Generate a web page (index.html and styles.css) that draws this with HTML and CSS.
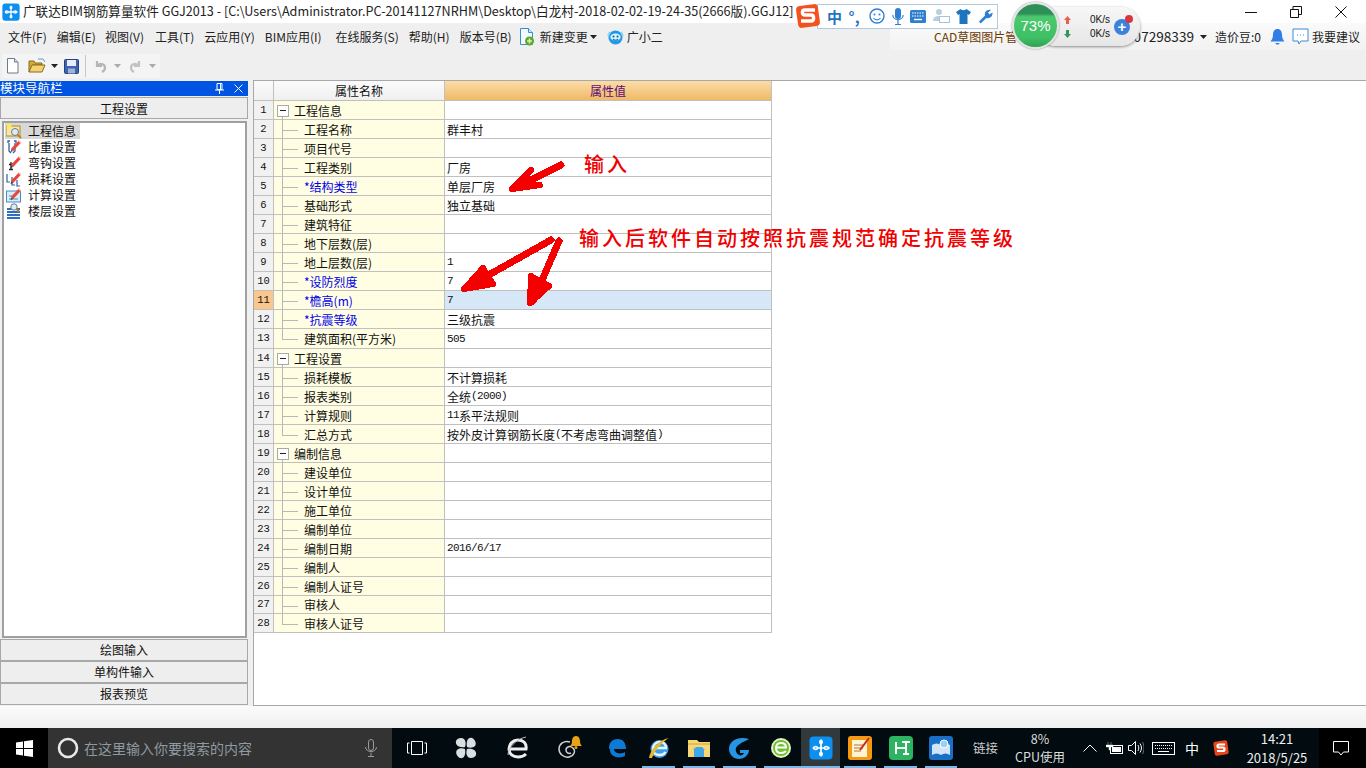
FILE: index.html
```html
<!DOCTYPE html>
<html lang="zh-CN">
<head>
<meta charset="utf-8">
<title>广联达BIM钢筋算量软件 GGJ2013</title>
<link rel="stylesheet" href="styles.css">
</head>
<body>
<svg class="defs" aria-hidden="true">
  <symbol id="logo" viewBox="0 0 24 24">
    <rect x="0.5" y="0.5" width="23" height="23" rx="4" fill="#0b8ff0"/>
    <path d="M4 12c2 2 4 1.500 5 0h6c1 1.500 3 2 5 0-2-2-4-1.500-5 0M9 12c-1-1.500-3-2-5 0M12 4v16M12 4c-1.500 1-1.500 3 0 4 1.500-1 1.500-3 0-4M12 20c-1.500-1-1.500-3 0-4 1.500 1 1.500 3 0 4" fill="none" stroke="#fff" stroke-width="1.700"/>
  </symbol>
  <symbol id="pencil" viewBox="0 0 16 16">
    <path d="M6 11 14 2.500" stroke="#e8463a" stroke-width="3.200"/>
    <path d="M7 12 4.500 13 5.500 10.500z" fill="#333"/>
    <path d="M12.500 1.500l2.500 2.500" stroke="#f7c0b8" stroke-width="1.200"/>
  </symbol>
  <symbol id="chev" viewBox="0 0 7 4"><path d="M0 0h7L3.500 4z"/></symbol>
</svg>

<div class="app">
  <header class="titlebar">
    <svg class="t-logo"><use href="#logo"/></svg>
    <span class="t-text">广联达BIM钢筋算量软件 GGJ2013 - [C:\Users\Administrator.PC-20141127NRHM\Desktop\白龙村-2018-02-02-19-24-35(2666版).GGJ12]</span>
    <div class="winbtns">
      <span class="winbtn"><svg width="12" height="12"><path d="M0 6.500h12" stroke="#111"/></svg></span>
      <span class="winbtn"><svg width="12" height="12"><path d="M.5 3.500h8v8h-8zM3 3.500V.5h8.500v8H8.500" fill="none" stroke="#111"/></svg></span>
      <span class="winbtn"><svg width="12" height="12"><path d="M.5.500l11 11M11.500.500l-11 11" stroke="#111"/></svg></span>
    </div>
  </header>

  <nav class="menubar">
    <span class="mi">文件(F)</span>
    <span class="mi">编辑(E)</span>
    <span class="mi mi-v">视图(V)</span>
    <span class="mi">工具(T)</span>
    <span class="mi">云应用(Y)</span>
    <span class="mi mi-bim">BIM应用(I)</span>
    <span class="mi">在线服务(S)</span>
    <span class="mi">帮助(H)</span>
    <span class="mi mi-ver">版本号(B)</span>
    <span class="mi mi-new">
      <svg width="16" height="18" viewBox="0 0 16 18"><path d="M1.500.5h8l4 4v12h-12z" fill="#f3f9ff" stroke="#3a8ed0"/><path d="M9.500.5v4h4" fill="#cfe6fa" stroke="#3a8ed0"/><circle cx="10.500" cy="13" r="4.500" fill="#5aa92a"/><path d="M10.500 10.500v5M8 13h5" stroke="#d8f2b8" stroke-width="1.600"/></svg>
      新建变更 <svg class="chev chev-m"><use href="#chev"/></svg>
    </span>
    <span class="mi mi-ic">
      <svg width="17" height="16" viewBox="0 0 17 16"><circle cx="8.500" cy="8.500" r="7" fill="#1e9be8"/><path d="M1 7 3 3M16 7l-2-4" stroke="#8fd0f5" stroke-width="2"/><ellipse cx="8.500" cy="8" rx="5.200" ry="3.600" fill="#d8f1ff"/><circle cx="6.500" cy="7.500" r="1" fill="#0a5a9a"/><circle cx="10.500" cy="7.500" r="1" fill="#0a5a9a"/><path d="M6 10c1.500 1.500 3.500 1.500 5 0" stroke="#0a5a9a" fill="none"/></svg>
      广小二
    </span>
    <div class="menu-right">
      <span class="cad">CAD草图图片管</span>
      <span class="phone">907298339</span>
      <svg class="chev chev-r"><use href="#chev"/></svg>
      <span class="beans">造价豆:0</span>
      <svg class="bell" width="15" height="18" viewBox="0 0 15 18"><path d="M7.500 1C4.500 1 3 3.500 3 6.500c0 4-1.500 5.500-2.500 7h14c-1-1.500-2.500-3-2.500-7C12 3.500 10.500 1 7.500 1z" fill="#2f7fe6"/><path d="M5.500 15h4c0 2-4 2-4 0z" fill="#2f7fe6"/></svg>
      <svg class="chat" width="17" height="18" viewBox="0 0 17 18"><path d="M1 1h15v12H9l-2 3-1-3H1z" fill="#fff" stroke="#3d8bd8"/><path d="M5 7h1M8 7h1M11 7h1" stroke="#3d8bd8"/></svg>
      <span>我要建议</span>
    </div>
  </nav>

  <div class="toolbar">
    <div class="tools">
      <svg class="tool" width="15" height="16" viewBox="0 0 15 16"><path d="M2.500.5h7l3.500 3.500v11h-10.500z" fill="#fff" stroke="#6b7b8a"/><path d="M9.500.5v3.500H13" fill="#dce4ec" stroke="#6b7b8a"/></svg>
      <svg class="tool t2" width="18" height="16" viewBox="0 0 18 16"><path d="M1 3h5l1 2h7v2H5L1 14z" fill="#d8a83c" stroke="#8a6a1c"/><path d="M1 14l3-7h13l-3 7z" fill="#f3d272" stroke="#8a6a1c"/><path d="M10 1h5l2 3" fill="none" stroke="#5a9ad0"/></svg>
      <svg class="chev t3"><use href="#chev"/></svg>
      <svg class="tool t4" width="15" height="15" viewBox="0 0 15 15"><rect x=".5" y=".5" width="14" height="14" rx="1" fill="#3f63b0" stroke="#23417e"/><rect x="3" y="1" width="9" height="6" fill="#e8eef8"/><rect x="4" y="9.500" width="7" height="5" fill="#9fb3d8"/></svg>
      <i class="sep"></i>
      <svg class="tool t5" width="15" height="15" viewBox="0 0 15 15"><path d="M4 2v5h5M4 7c2-3 8-3 8 2 0 2-1 3-3 4" fill="none" stroke="#b5b5b5" stroke-width="2.200"/></svg>
      <svg class="chev t6 dim"><use href="#chev"/></svg>
      <svg class="tool t7" width="15" height="15" viewBox="0 0 15 15"><path d="M11 2v5H6M11 7C9 4 3 4 3 9c0 2 1 3 3 4" fill="none" stroke="#c2c2c2" stroke-width="2.200"/></svg>
      <svg class="chev t6 dim"><use href="#chev"/></svg>
    </div>
  </div>

  <div class="workspace">
    <aside class="nav">
      <div class="nav-head">
        <span>模块导航栏</span>
        <svg class="pin" width="9" height="11" viewBox="0 0 9 11"><path d="M2 .5h5v6H2zM0 7h9M4.500 7v4M5.500 1v5" fill="none" stroke="#fff"/></svg>
        <svg class="nav-x" width="9" height="9" viewBox="0 0 9 9"><path d="M.5.500l8 8M8.500.500l-8 8" stroke="#fff"/></svg>
      </div>
      <div class="nav-btn nav-top">工程设置</div>
      <ul class="nav-list">
        <li class="li active">
          <svg width="16" height="16" viewBox="0 0 16 16"><rect x="0" y="3" width="14" height="10" fill="#f6e6a8" stroke="#b08a30"/><circle cx="3" cy="3" r="2.500" fill="#ffe860"/><circle cx="9" cy="9" r="3.500" fill="#dfeaf5" stroke="#6a7a8a"/><path d="M11.500 11.500l3.500 3.500" stroke="#c08020" stroke-width="2"/></svg>
          工程信息
        </li>
        <li class="li">
          <svg width="16" height="16" viewBox="0 0 16 16"><path d="M4 2H2v2M3 4v8l2 2M8 2h2v2M9 4v8l-2 2" fill="none" stroke="#2d5fa8" stroke-width="1.300"/><use href="#pencil"/></svg>
          比重设置
        </li>
        <li class="li">
          <svg width="16" height="16" viewBox="0 0 16 16"><path d="M5 7v7M3 14.500h4M3 9.500h4" fill="none" stroke="#222" stroke-width="1.300"/><use href="#pencil"/></svg>
          弯钩设置
        </li>
        <li class="li">
          <svg width="16" height="16" viewBox="0 0 16 16"><path d="M1 3v8h3M6 6v8h3M11 9v6h3" fill="none" stroke="#2d5fa8" stroke-width="1.200"/><use href="#pencil"/></svg>
          损耗设置
        </li>
        <li class="li">
          <svg width="16" height="16" viewBox="0 0 16 16"><rect x=".5" y="4" width="14" height="11" fill="#d8ecfa" stroke="#4a8ac0"/><path d="M3 9h3M3 12h9" stroke="#4a8ac0"/><use href="#pencil"/></svg>
          计算设置
        </li>
        <li class="li">
          <svg width="16" height="16" viewBox="0 0 16 16"><path d="M1 6h13M1 9h13M1 12h13M1 15h13" stroke="#2d6fc0" stroke-width="1.800"/><circle cx="8" cy="4" r="3.200" fill="#dfeaf5" stroke="#6a7a8a"/><path d="M10.500 6l3 3" stroke="#c08020" stroke-width="2"/></svg>
          楼层设置
        </li>
      </ul>
      <div class="nav-btn nb">绘图输入</div>
      <div class="nav-btn nb">单构件输入</div>
      <div class="nav-btn nb">报表预览</div>
    </aside>

    <main class="main">
      <div class="grid">
        <div class="row head"><div class="n"></div><div class="nm">属性名称</div><div class="val">属性值</div></div>
        <div class="row"><div class="n">1</div><div class="nm grp"><i class="box"></i>工程信息</div><div class="val"></div></div>
        <div class="row"><div class="n">2</div><div class="nm mid">工程名称</div><div class="val">群丰村</div></div>
        <div class="row"><div class="n">3</div><div class="nm mid">项目代号</div><div class="val"></div></div>
        <div class="row"><div class="n">4</div><div class="nm mid">工程类别</div><div class="val">厂房</div></div>
        <div class="row"><div class="n">5</div><div class="nm mid req">*结构类型</div><div class="val">单层厂房</div></div>
        <div class="row"><div class="n">6</div><div class="nm mid">基础形式</div><div class="val">独立基础</div></div>
        <div class="row"><div class="n">7</div><div class="nm mid">建筑特征</div><div class="val"></div></div>
        <div class="row"><div class="n">8</div><div class="nm mid">地下层数(层)</div><div class="val"></div></div>
        <div class="row"><div class="n">9</div><div class="nm mid">地上层数(层)</div><div class="val"><span class="lat">1</span></div></div>
        <div class="row"><div class="n">10</div><div class="nm mid req">*设防烈度</div><div class="val"><span class="lat">7</span></div></div>
        <div class="row sel"><div class="n">11</div><div class="nm mid req">*檐高(m)</div><div class="val"><span class="lat">7</span></div></div>
        <div class="row"><div class="n">12</div><div class="nm mid req">*抗震等级</div><div class="val">三级抗震</div></div>
        <div class="row tall"><div class="n">13</div><div class="nm last">建筑面积(平方米)</div><div class="val"><span class="lat">505</span></div></div>
        <div class="row"><div class="n">14</div><div class="nm grp"><i class="box"></i>工程设置</div><div class="val"></div></div>
        <div class="row"><div class="n">15</div><div class="nm mid">损耗模板</div><div class="val">不计算损耗</div></div>
        <div class="row"><div class="n">16</div><div class="nm mid">报表类别</div><div class="val">全统<span class="lat">(2000)</span></div></div>
        <div class="row"><div class="n">17</div><div class="nm mid">计算规则</div><div class="val"><span class="lat">11</span>系平法规则</div></div>
        <div class="row"><div class="n">18</div><div class="nm last">汇总方式</div><div class="val">按外皮计算钢筋长度<span class="lat">(</span>不考虑弯曲调整值<span class="lat">)</span></div></div>
        <div class="row"><div class="n">19</div><div class="nm grp"><i class="box"></i>编制信息</div><div class="val"></div></div>
        <div class="row"><div class="n">20</div><div class="nm mid">建设单位</div><div class="val"></div></div>
        <div class="row"><div class="n">21</div><div class="nm mid">设计单位</div><div class="val"></div></div>
        <div class="row"><div class="n">22</div><div class="nm mid">施工单位</div><div class="val"></div></div>
        <div class="row"><div class="n">23</div><div class="nm mid">编制单位</div><div class="val"></div></div>
        <div class="row"><div class="n">24</div><div class="nm mid">编制日期</div><div class="val"><span class="lat">2016/6/17</span></div></div>
        <div class="row"><div class="n">25</div><div class="nm mid">编制人</div><div class="val"></div></div>
        <div class="row"><div class="n">26</div><div class="nm mid">编制人证号</div><div class="val"></div></div>
        <div class="row short"><div class="n">27</div><div class="nm mid">审核人</div><div class="val"></div></div>
        <div class="row"><div class="n">28</div><div class="nm last">审核人证号</div><div class="val"></div></div>
      </div>
      <svg class="ink" width="320" height="160" viewBox="0 0 320 160" aria-hidden="true">
        <g fill="none" stroke="#f50000" stroke-linecap="round" stroke-linejoin="round" shape-rendering="crispEdges">
          <path d="M306 14 262 36" stroke-width="7"/>
          <path d="M276 19 257 38 285 34 262 36z" fill="#f50000" stroke-width="6"/>
          <path d="M296 89 214 135" stroke-width="7"/>
          <path d="M228 117 209 138 238 133z" fill="#f50000" stroke-width="6"/>
          <path d="M304 90 278 150" stroke-width="7"/>
          <path d="M276 125 275 152 294 135z" fill="#f50000" stroke-width="6"/>
        </g>
      </svg>
      <div class="note note-a">输入</div>
      <div class="note note-b">输入后软件自动按照抗震规范确定抗震等级</div>
    </main>
  </div>

  <div class="strip"></div>

  <footer class="taskbar">
    <div class="start"><svg width="17" height="17" viewBox="0 0 17 17"><path d="M0 2.500 7 1.500v6.500H0zM8 1.300 17 0v8H8zM0 9h7v6.500L0 14.500zM8 9h9v8L8 15.700z" fill="#fff"/></svg></div>
    <div class="search">
      <svg width="22" height="22" viewBox="0 0 22 22"><circle cx="11" cy="11" r="9" fill="none" stroke="#e8e8e8" stroke-width="2.600"/></svg>
      <span class="s-text">在这里输入你要搜索的内容</span>
      <svg class="s-mic" width="12" height="18" viewBox="0 0 12 18"><rect x="3.500" y=".5" width="5" height="11" rx="2.500" fill="none" stroke="#999"/><path d="M.5 8c0 6 11 6 11 0M6 13.500V17M3 17.500h6" fill="none" stroke="#999"/></svg>
    </div>
    <div class="tb w49"><svg width="20" height="14" viewBox="0 0 20 14"><path d="M4.500.5h11v13h-11zM2.500 2H.5v10h2M17.500 2h2v10h-2" fill="none" stroke="#fff"/></svg></div>
    <div class="tb w50"><svg width="22" height="22" viewBox="0 0 22 22" fill="#d9e0e2"><path d="M10 10C4 11 0 8 1 4c1-3 6-4 8-2 2 2 2 5 1 8zM12 10c-1-6 1-10 5-9 3 1 5 6 3 8-2 2-5 2-8 1zM12 12c6-1 10 2 9 6-1 3-6 4-8 2-2-2-2-5-1-8zM10 12c1 6-1 10-5 9-3-1-5-6-3-8 2-2 5-2 8-1z"/></svg></div>
    <div class="tb w54"><svg width="22" height="24" viewBox="0 0 22 24"><path d="M3 13h16c1-6-3-9-8-9S2 8 2 13s4 8 9 8c3 0 6-1 8-3" fill="none" stroke="#eee" stroke-width="3"/><path d="M1 19C1 12 9 3 19 1" fill="none" stroke="#bbb" stroke-width="1"/></svg></div>
    <div class="tb w51 bellwrap"><svg width="27" height="26" viewBox="0 0 27 26"><path d="M13 7C7 5 2 9 2 14s5 9 10 8 7-6 4-9-7-1-7 2 3 4 5 3" fill="none" stroke="#cfcfcf" stroke-width="1.500"/><path d="M19 1c-3 0-4 3-4 5 0 3-1 4-2 5h12c-1-1-2-2-2-5 0-2-1-5-4-5z" fill="#e8a317"/><circle cx="19" cy="12.500" r="1.500" fill="#e8a317"/></svg></div>
    <div class="tb w42"><svg width="20" height="20" viewBox="0 0 20 20"><path d="M2 10C2 4 6 1 11 1s8 4 8 10H7c0 4 6 6 11 3v4c-6 3-15 1-15-6" fill="#0c7ad6"/></svg></div>
    <div class="tb w41 run"><svg width="24" height="24" viewBox="0 0 24 24"><circle cx="12.500" cy="13" r="9" fill="#3d9fe6"/><path d="M6 12h13c0-4-3-6-6.500-6S6 9 6 13s3 6 6.500 6c3 0 5-1 6-3" fill="none" stroke="#e8f4fc" stroke-width="2.400"/><path d="M2 22C3 14 12 4 22 2c-4 2-14 11-17 20z" fill="#e8b830"/></svg></div>
    <div class="tb w40 run"><svg width="22" height="20" viewBox="0 0 22 20"><path d="M0 2h9l2 2h11v15H0z" fill="#f7d774"/><path d="M0 6h22" stroke="#c9a440"/><rect x="6" y="12" width="10" height="7" fill="#3fa8e8"/><path d="M8 9h6l3 3H5z" fill="#3fa8e8"/></svg></div>
    <div class="tb w41 run"><svg width="23" height="24" viewBox="0 0 23 24"><path d="M21 3C10 0 1 5 1 13c0 6 5 10 10 10s10-4 10-9h-9v3h4c-1 2-3 3-5 2s-4-4-3-7 5-5 13-9z" fill="#2795e6"/></svg></div>
    <div class="tb w41 run runx"><svg width="22" height="22" viewBox="0 0 22 22"><circle cx="11" cy="11" r="10" fill="#dff3c6"/><circle cx="11" cy="11" r="8" fill="#6fbe2c"/><path d="M6 10.500h10c0-3-2-4.500-5-4.500s-5 2-5 5 2 5 5 5c2 0 4-1 5-2" fill="none" stroke="#fff" stroke-width="2"/></svg></div>
    <div class="tb w39 run active"><svg width="24" height="24"><use href="#logo"/></svg></div>
    <div class="tb w40 run"><svg width="24" height="24" viewBox="0 0 24 24"><rect width="24" height="24" rx="3" fill="#f39a12"/><rect x="4" y="4" width="15" height="17" fill="#fdf3d5"/><path d="M6 9h9M6 12h9M6 15h7" stroke="#b5762a"/><path d="M12 14 21 2" stroke="#c62828" stroke-width="2"/></svg></div>
    <div class="tb w41 run"><svg width="24" height="24" viewBox="0 0 24 24"><rect width="24" height="24" rx="4" fill="#2cb463"/><path d="M7 6v12M7 12h10M13 6h8M17 6v12M14 18h6" stroke="#fff" stroke-width="2" fill="none"/></svg></div>
    <div class="tb w40 run"><svg width="24" height="24" viewBox="0 0 24 24"><rect width="24" height="24" rx="3" fill="#1a6fc4"/><path d="M3 9c3-2 6-2 9 0 3-2 6-2 9 0v10c-3-2-6-2-9 0-3-2-6-2-9 0z" fill="#cfe6fa"/><circle cx="15" cy="8" r="4" fill="#9ad0f5" stroke="#fff"/></svg></div>
    <div class="tray-txt">链接</div>
    <div class="cpu"><span>8%</span><span>CPU使用</span></div>
    <div class="tray">
      <svg class="tr chevup" width="14" height="8" viewBox="0 0 14 8"><path d="M.5 7.500 7 1l6.500 6.500" fill="none" stroke="#fff"/></svg>
      <svg class="tr bat" width="17" height="12" viewBox="0 0 17 12"><rect x="4.500" y="3.500" width="12" height="8" fill="none" stroke="#fff"/><rect x="6" y="5" width="9" height="5" fill="#fff"/><path d="M2 0v3M5 0v3M0 3h7v2H4v3H3V5H0z" fill="#fff" stroke="#fff" stroke-width=".4"/></svg>
      <svg class="tr vol" width="16" height="14" viewBox="0 0 16 14"><path d="M.5 4.500h3l4-4v13l-4-4h-3zM10 4c1 2 1 4 0 6M12 2.500c2 3 2 6 0 9" fill="none" stroke="#fff"/><path d="M14.500 1c2 3.500 2 8.500 0 12" fill="none" stroke="#777"/></svg>
      <svg class="tr kbd" width="23" height="13" viewBox="0 0 23 13"><rect x=".5" y=".5" width="22" height="12" fill="none" stroke="#fff"/><path d="M3 3.500h17M3 6.500h17" stroke="#fff" stroke-dasharray="1 1"/><path d="M6 9.500h11" stroke="#fff"/></svg>
      <span class="tr zh">中</span>
      <svg class="tr sg" width="16" height="16" viewBox="0 0 16 16"><rect x="1" y="1" width="14" height="14" rx="2" fill="#e8451b" transform="rotate(-8 8 8)"/><path d="M12 4.500H6c-2 0-2 3 0 3h4c2 0 2 3.500 0 3.500H4" fill="none" stroke="#fff" stroke-width="2.200"/></svg>
    </div>
    <div class="clock"><span>14:21</span><span>2018/5/25</span></div>
    <div class="notify"><svg width="16" height="15" viewBox="0 0 16 15"><path d="M.5.500h15v10.500h-5l-2.500 3-2.500-3h-5z" fill="none" stroke="#fff"/></svg></div>
  </footer>
</div>

<div class="sogou">
  <svg class="sg-logo" width="26" height="26" viewBox="0 0 26 26"><rect x="2" y="2" width="22" height="22" rx="4" fill="#f4511e" transform="rotate(-8 13 13)"/><path d="M20 7H10c-3.500 0-3.500 5 0 5h6c3.500 0 3.500 6 0 6H6" fill="none" stroke="#fff" stroke-width="3.400"/></svg>
  <div class="sg-bar">
    <span class="sg-zh">中</span>
    <span class="sg-p">°,</span>
    <svg width="16" height="16" viewBox="0 0 16 16"><circle cx="8" cy="8" r="7" fill="none" stroke="#2f7fd0" stroke-width="1.400"/><circle cx="5.500" cy="6.500" r="1" fill="#2f7fd0"/><circle cx="10.500" cy="6.500" r="1" fill="#2f7fd0"/><path d="M4.500 10c2 2.500 5 2.500 7 0" fill="none" stroke="#2f7fd0" stroke-width="1.200"/></svg>
    <svg width="12" height="17" viewBox="0 0 12 17"><rect x="3" y="0" width="6" height="11" rx="3" fill="#2f7fd0"/><path d="M.8 7c0 6 10.400 6 10.400 0M6 12v4M3 16.500h6" fill="none" stroke="#2f7fd0" stroke-width="1.200"/></svg>
    <svg width="16" height="13" viewBox="0 0 16 13"><rect width="16" height="13" rx="1.500" fill="#2f7fd0"/><path d="M2 3h12M2 6h12" stroke="#fff" stroke-dasharray="1.500 1"/><path d="M4 9.500h8" stroke="#fff" stroke-width="1.400"/></svg>
    <svg width="17" height="16" viewBox="0 0 17 16"><circle cx="6" cy="4" r="3" fill="#b8cfe0"/><path d="M0 13c0-4 3-5 6-5s4 1 4 1v4z" fill="#b8cfe0"/><rect x="6.500" y="8.500" width="10" height="6" fill="#fff" stroke="#a9c2d6"/></svg>
    <svg width="15" height="15" viewBox="0 0 15 15"><path d="M4.500 0 0 3l2 3 1.500-1v10h8V5L13 6l2-3-4.500-3c-1 1.500-5 1.500-6 0z" fill="#1f74bf"/></svg>
    <svg width="15" height="15" viewBox="0 0 15 15"><path d="M1 12.500 7 6.500C6 3.500 9 0 13 1l-3 2.500 1.500 2 3-2c.5 4-3 6.500-6 5.500l-6 5.500z" fill="#2f7fd0"/></svg>
  </div>
</div>

<div class="meter">
  <div class="pill">
    <div class="rates">
      <div class="rate"><svg width="7" height="8" viewBox="0 0 7 8"><path d="M3.500 0 7 4H5v4H2V4H0z" fill="#e8604c"/></svg><span>0K/s</span></div>
      <div class="rate"><svg width="7" height="8" viewBox="0 0 7 8"><path d="M3.500 8 7 4H5V0H2v4H0z" fill="#2f9a5a"/></svg><span>0K/s</span></div>
    </div>
    <div class="plus"><i></i></div>
  </div>
  <div class="ball"><span>73%</span></div>
</div>
</body>
</html>
```

FILE: styles.css
```css
* { box-sizing: border-box; margin: 0; padding: 0; }
html, body { width: 1366px; height: 768px; overflow: hidden; }
body { font: 12px/1 "Noto Sans CJK SC", "Liberation Sans", sans-serif; color: #111; background: #f0f0f0; position: relative; }
.defs { position: absolute; width: 0; height: 0; }
.app { display: flex; flex-direction: column; height: 768px; }
svg { display: block; flex: none; }

.titlebar { height: 23px; background: #fff; display: flex; align-items: center; padding-left: 2px; flex: none; }
.t-logo { width: 18px; height: 18px; margin-right: 3px; }
.t-text { font-size: 12.630px; white-space: nowrap; color: #222; font-family: "Noto Sans CJK SC", sans-serif; flex: none; }
.winbtns { margin-left: auto; display: flex; padding-right: 3px; }
.winbtn { width: 45px; height: 23px; display: flex; align-items: center; justify-content: center; }

.menubar { height: 27px; flex: none; display: flex; align-items: center; padding-left: 8px; background: #efefef; white-space: nowrap; color: #222; }
.mi { margin-right: 10px; display: flex; align-items: center; gap: 3px; }
.mi-v { margin-right: 11px; margin-left: -1px; }
.mi-bim { margin-right: 14px; }
.mi-ver { margin-right: 7px; }
.mi-new { gap: 5px; margin-right: 10px; }
.mi-ic { margin-right: 0; }
.chev { width: 7px; height: 4px; fill: #222; margin-left: 5px; }
.chev-m { margin-left: -3px; }
.menu-right { margin-left: auto; align-self: stretch; width: 476px; display: flex; align-items: center; padding: 0 6px 0 44px; background: linear-gradient(#fafafa, #f2f2f2); }
.cad { color: #6b3a00; margin-right: auto; white-space: nowrap; }
.phone { font-size: 13.600px; }
.chev-r { margin-left: 6px; margin-right: 8px; }
.beans { margin-right: 9px; }
.bell { margin-right: 7px; }
.chat { margin-right: 3px; }

.toolbar { height: 30px; flex: none; background: #efefef; padding: 4px 0 0 2px; }
.tools { width: 158px; height: 24px; background: #f4f4f4; display: flex; align-items: center; padding-left: 3px; }
.t2 { margin-left: 8px; }
.t3 { margin-left: 5px; }
.t4 { margin-left: 6px; }
.sep { width: 1px; height: 22px; background: #c8c8c8; margin: 0 7px 0 6px; }
.t6 { margin-left: 6px; }
.t7 { margin-left: 7px; }
.dim { fill: #aaa; }

.workspace { flex: 1; display: flex; min-height: 0; background: #f0f0f0; }
.nav { width: 248px; flex: none; display: flex; flex-direction: column; padding: 1px 0 1px; }
.nav-head { height: 15px; flex: none; background: #0054e3; color: #fff; display: flex; align-items: center; font-size: 12.500px; }
.nav-head span { flex: 1; }
.pin { margin-right: 10px; }
.nav-x { margin-right: 5px; }
.nav-btn { height: 22px; flex: none; margin: 1px 0 0 0; background: #eee; border: 1px solid #a8a8a8; display: flex; align-items: center; justify-content: center; color: #111; }
.nav-top { padding-top: 2px; }
.nav-list { flex: 1; list-style: none; background: #fff; border: 2px solid #a0a0a0; margin: 2px 0 1px 2px; width: 245px; padding: 0 1px; }
.li { height: 16px; display: flex; align-items: center; gap: 6px; padding-left: 1px; width: 75px; white-space: nowrap; }
.active { background: #d8d8d8; }
.nb { border-width: 0 1px 1px 1px; margin-top: 0; border-top: 1px solid #a8a8a8; }

.main { flex: 1; margin-left: 5px; background: #fff; border: solid #a8a8a8; border-width: 1px 0 1px 1px; position: relative; }
.grid { width: 518px; }
.row { display: grid; grid-template-columns: 20px 171px 327px; height: 19px; }
.row.head, .row.tall { height: 20px; }
.row.short { height: 18px; }
.row > div { border-bottom: 1px solid #c0c0c0; border-right: 1px solid #c0c0c0; display: flex; align-items: center; white-space: nowrap; }
.n { background: #f1f1f1; justify-content: center; font: 10.500px/1 "Liberation Mono", monospace; }
.nm { background: #fffde2; padding: 1px 0 0 30px; position: relative; }
.val { padding: 1px 0 0 2px; background: #fff; }
.head .n { background: linear-gradient(#fbfbfb, #f0f0f0); }
.head .nm { background: linear-gradient(#fbfbfb, #f0f0f0); justify-content: center; padding: 0; }
.head .val { background: linear-gradient(#fbdda9, #f0b965); justify-content: center; padding: 0; color: #5d0a7a; }
.req { color: #0000f0; }
.sel .n { background: #f9c68e; }
.sel .val { background: #d6e8f7; }
.lat { font: 11px/1 "Liberation Mono", monospace; letter-spacing: -.6px; }
.nm.grp { padding-left: 3px; }
.box { width: 12px; height: 12px; border: 1px solid #aaa; background: #fff; margin-right: 5px; position: relative; flex: none; }
.box::after { content: ""; position: absolute; left: 2px; right: 2px; top: 4px; height: 1px; background: #222; }
.grp::before, .mid::before, .last::before { content: ""; position: absolute; left: 8px; width: 1px; background: #b8b8b8; }
.mid::before { top: -1px; bottom: -1px; }
.last::before { top: -1px; height: 11px; }
.grp::before { top: 15px; bottom: -1px; }
.mid::after, .last::after { content: ""; position: absolute; left: 8px; top: 10px; width: 16px; height: 1px; background: #b8b8b8; }

.ink { position: absolute; left: 1px; top: 70px; }
.note { position: absolute; color: #f00000; font-size: 20px; line-height: 1; font-weight: 500; white-space: nowrap; }
.note-a { left: 330px; top: 73px; letter-spacing: 3px; }
.note-b { left: 325px; top: 147px; letter-spacing: 3px; }

.strip { height: 22px; flex: none; background: linear-gradient(#fbfbfb, #f0f0f0); }

.taskbar { height: 40px; flex: none; background: #020c10; display: flex; align-items: center; color: #fff; }
.start { width: 48px; height: 40px; background: #000; display: flex; align-items: center; justify-content: center; }
.search { width: 344px; height: 40px; background: #333; display: flex; align-items: center; padding-left: 9px; color: #8f9aa0; font-size: 14px; }
.s-text { margin-left: 5px; }
.s-mic { margin-left: auto; margin-right: 15px; }
.tb { height: 40px; display: flex; align-items: center; justify-content: center; flex: none; position: relative; }
.w49 { width: 49px; } .w50 { width: 50px; } .w54 { width: 54px; } .w51 { width: 51px; }
.w42 { width: 42px; } .w41 { width: 41px; } .w40 { width: 40px; } .w39 { width: 39px; }
.run::after { content: ""; position: absolute; left: 4px; right: 4px; bottom: 0; height: 2px; background: #76b9ed; }
.active.run { background: #32393c; }
.active.run::after { left: 0; right: 0; }
.runx::after { right: 0; }
.tray-txt { width: 49px; text-align: center; font-size: 12.500px; color: #ccc; }
.cpu { width: 60px; display: flex; flex-direction: column; align-items: center; gap: 5px; font-size: 12.500px; color: #ddd; }
.tray { width: 165px; display: flex; align-items: center; padding-left: 13px; }
.tr { flex: none; }
.bat { margin-left: 9px; }
.vol { margin-left: 5px; }
.kbd { margin-left: 8px; }
.zh { margin-left: 10px; font-size: 14px; }
.sg { margin-left: 14px; }
.clock { width: 84px; display: flex; flex-direction: column; align-items: center; gap: 6px; font-size: 13px; color: #eee; padding-bottom: 1px; }
.notify { flex: 1; display: flex; justify-content: center; background: #000; height: 40px; align-items: center; padding-right: 4px; }

.sogou { position: absolute; left: 795px; top: 3px; display: flex; align-items: center; }
.sg-logo { position: relative; z-index: 1; }
.sg-bar { margin-left: -4px; width: 181px; height: 25px; background: #fff; border: 1px solid #b4c9dc; display: flex; align-items: center; justify-content: space-between; padding: 0 4px 0 9px; }
.sg-zh { color: #1f74bf; font-size: 15px; font-weight: 700; }
.sg-p { color: #1f74bf; font-size: 15px; font-weight: 700; width: 14px; }

.meter { position: absolute; left: 1012px; top: 2px; width: 128px; height: 50px; }
.pill { position: absolute; left: 24px; top: 5px; width: 104px; height: 39px; border-radius: 20px; background: linear-gradient(#f7f7f7, #e6e6e6); box-shadow: 0 1px 3px #888; display: flex; align-items: center; padding-left: 28px; }
.rates { display: flex; flex-direction: column; gap: 4px; width: 46px; }
.rate { display: flex; align-items: center; justify-content: space-between; font: 10px/1 "Liberation Sans", sans-serif; height: 10px; color: #111; }
.plus { width: 16px; height: 16px; border-radius: 50%; background: #3c82dc; margin-left: 4px; position: relative; }
.plus::before { content: "+"; position: absolute; inset: 0; color: #fff; font: 700 15px/15px "Liberation Sans", sans-serif; text-align: center; }
.plus i { position: absolute; width: 8px; height: 8px; border-radius: 50%; background: #d9363e; right: -3px; top: -4px; }
.ball { position: absolute; left: 0; top: 0; width: 47px; height: 47px; border-radius: 50%; border: 2px solid #e4e4e4; background: linear-gradient(#2f8f58 0, #2f8f58 22%, #4cc96e 30%, #3dbf63 80%, #2fa052 100%); box-shadow: 0 0 2px #777; display: flex; align-items: center; justify-content: center; color: #fff; font: 15px/1 "Liberation Sans", sans-serif; }
```
